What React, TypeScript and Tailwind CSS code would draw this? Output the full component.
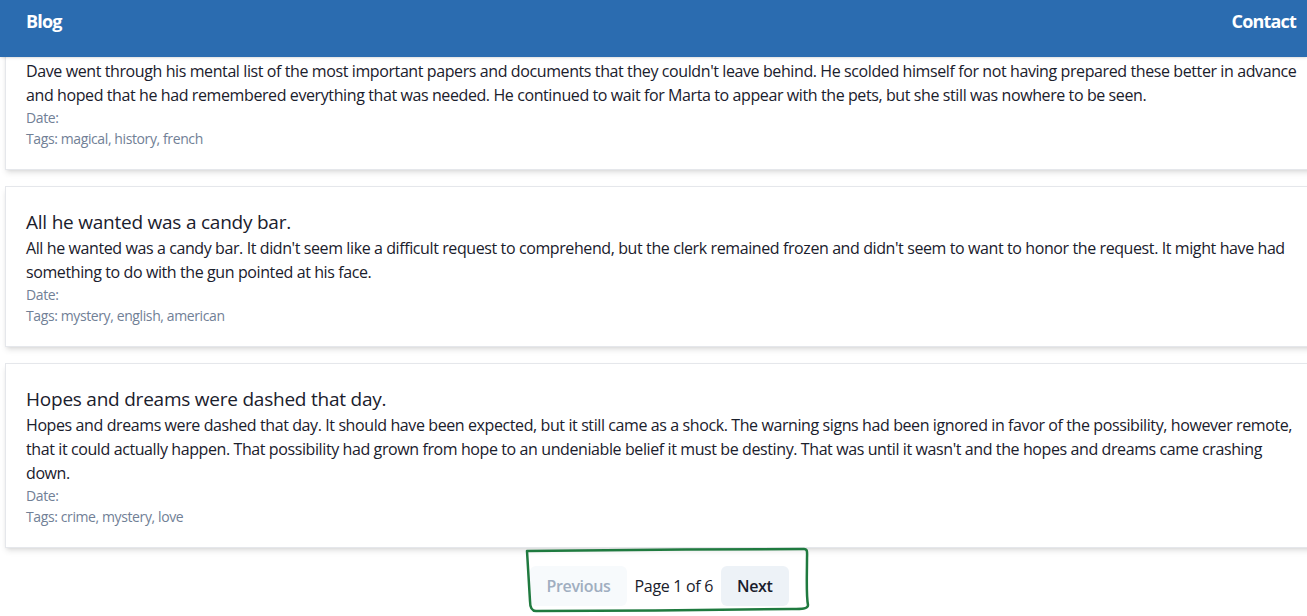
import React from 'react'

type Post = {
  title?: string
  body: string
  tags: string[]
}

const posts: Post[] = [
  {
    title: 'Dave went through his mental list.',
    body: "Dave went through his mental list of the most important papers and documents that they couldn't leave behind. He scolded himself for not having prepared these better in advance and hoped that he had remembered everything that was needed. He continued to wait for Marta to appear with the pets, but she still was nowhere to be seen.",
    tags: ['magical', 'history', 'french'],
  },
  {
    title: 'All he wanted was a candy bar.',
    body: "All he wanted was a candy bar. It didn't seem like a difficult request to comprehend, but the clerk remained frozen and didn't seem to want to honor the request. It might have had something to do with the gun pointed at his face.",
    tags: ['mystery', 'english', 'american'],
  },
  {
    title: 'Hopes and dreams were dashed that day.',
    body: "Hopes and dreams were dashed that day. It should have been expected, but it still came as a shock. The warning signs had been ignored in favor of the possibility, however remote, that it could actually happen. That possibility had grown from hope to an undeniable belief it must be destiny. That was until it wasn't and the hopes and dreams came crashing down.",
    tags: ['crime', 'mystery', 'love'],
  },
]

function PostCard({ post }: { post: Post }) {
  return (
    <div className="ml-[5px] w-[1316px] border border-gray-200 bg-white px-5 pb-5 pt-[21px] shadow-md">
      <h2 className="text-[19px] leading-[28px] tracking-[-0.012em] text-[#1a202c]">{post.title}</h2>
      <p className="text-[16px] leading-[24px] tracking-[-0.025em] text-[#1a202c]">{post.body}</p>
      <p className="text-[14px] leading-[21px] tracking-[-0.028em] text-[#718096]">Date:</p>
      <p className="text-[14px] leading-[21px] tracking-[-0.028em] text-[#718096]">
        Tags: {post.tags.join(', ')}
      </p>
    </div>
  )
}

export default function App() {
  return (
    <div
      className="relative h-[616px] w-full overflow-hidden bg-white"
      style={{ fontFamily: '"Open Sans", "Noto Sans", sans-serif' }}
    >
      <header className="relative z-10 flex h-[57px] items-start justify-between bg-[#2b6cb0] pl-[26px] pr-[11px] pt-[8px] text-[18px] font-bold tracking-[-0.045em] text-white shadow-sm">
        <span>Blog</span>
        <span>Contact</span>
      </header>

      <div className="mt-[-48px] flex flex-col gap-4">
        {posts.map((p) => (
          <PostCard key={p.body} post={p} />
        ))}
      </div>

      <div className="mt-[18px] flex items-center justify-center gap-2 pl-[12px]">
        <button
          disabled
          className="h-10 cursor-not-allowed rounded-md bg-[#f7fafc] px-4 text-[16px] font-semibold tracking-[-0.02em] text-[#a0aec0]"
        >
          Previous
        </button>
        <span className="text-[16px] tracking-[-0.02em] text-[#1a202c]">Page 1 of 6</span>
        <button className="h-10 rounded-md bg-[#edf2f7] px-4 text-[16px] font-semibold tracking-[-0.02em] text-[#1a202c]">
          Next
        </button>
      </div>

      {/* hand-drawn highlight around the pager */}
      <svg
        className="pointer-events-none absolute left-[522px] top-[545px]"
        width="292"
        height="72"
        viewBox="0 0 292 72"
        fill="none"
      >
        <path
          d="M5 6 C60 5 200 4 282 4 C286 4 285 8 285 14 C285 30 284 50 286 60 C286 64 280 64 270 64 C200 65 90 66 14 66 C9 66 8 62 8 56 C7 40 6 22 5 6 Z"
          stroke="#1f7a3f"
          strokeWidth="2.5"
          strokeLinejoin="round"
        />
      </svg>
    </div>
  )
}
